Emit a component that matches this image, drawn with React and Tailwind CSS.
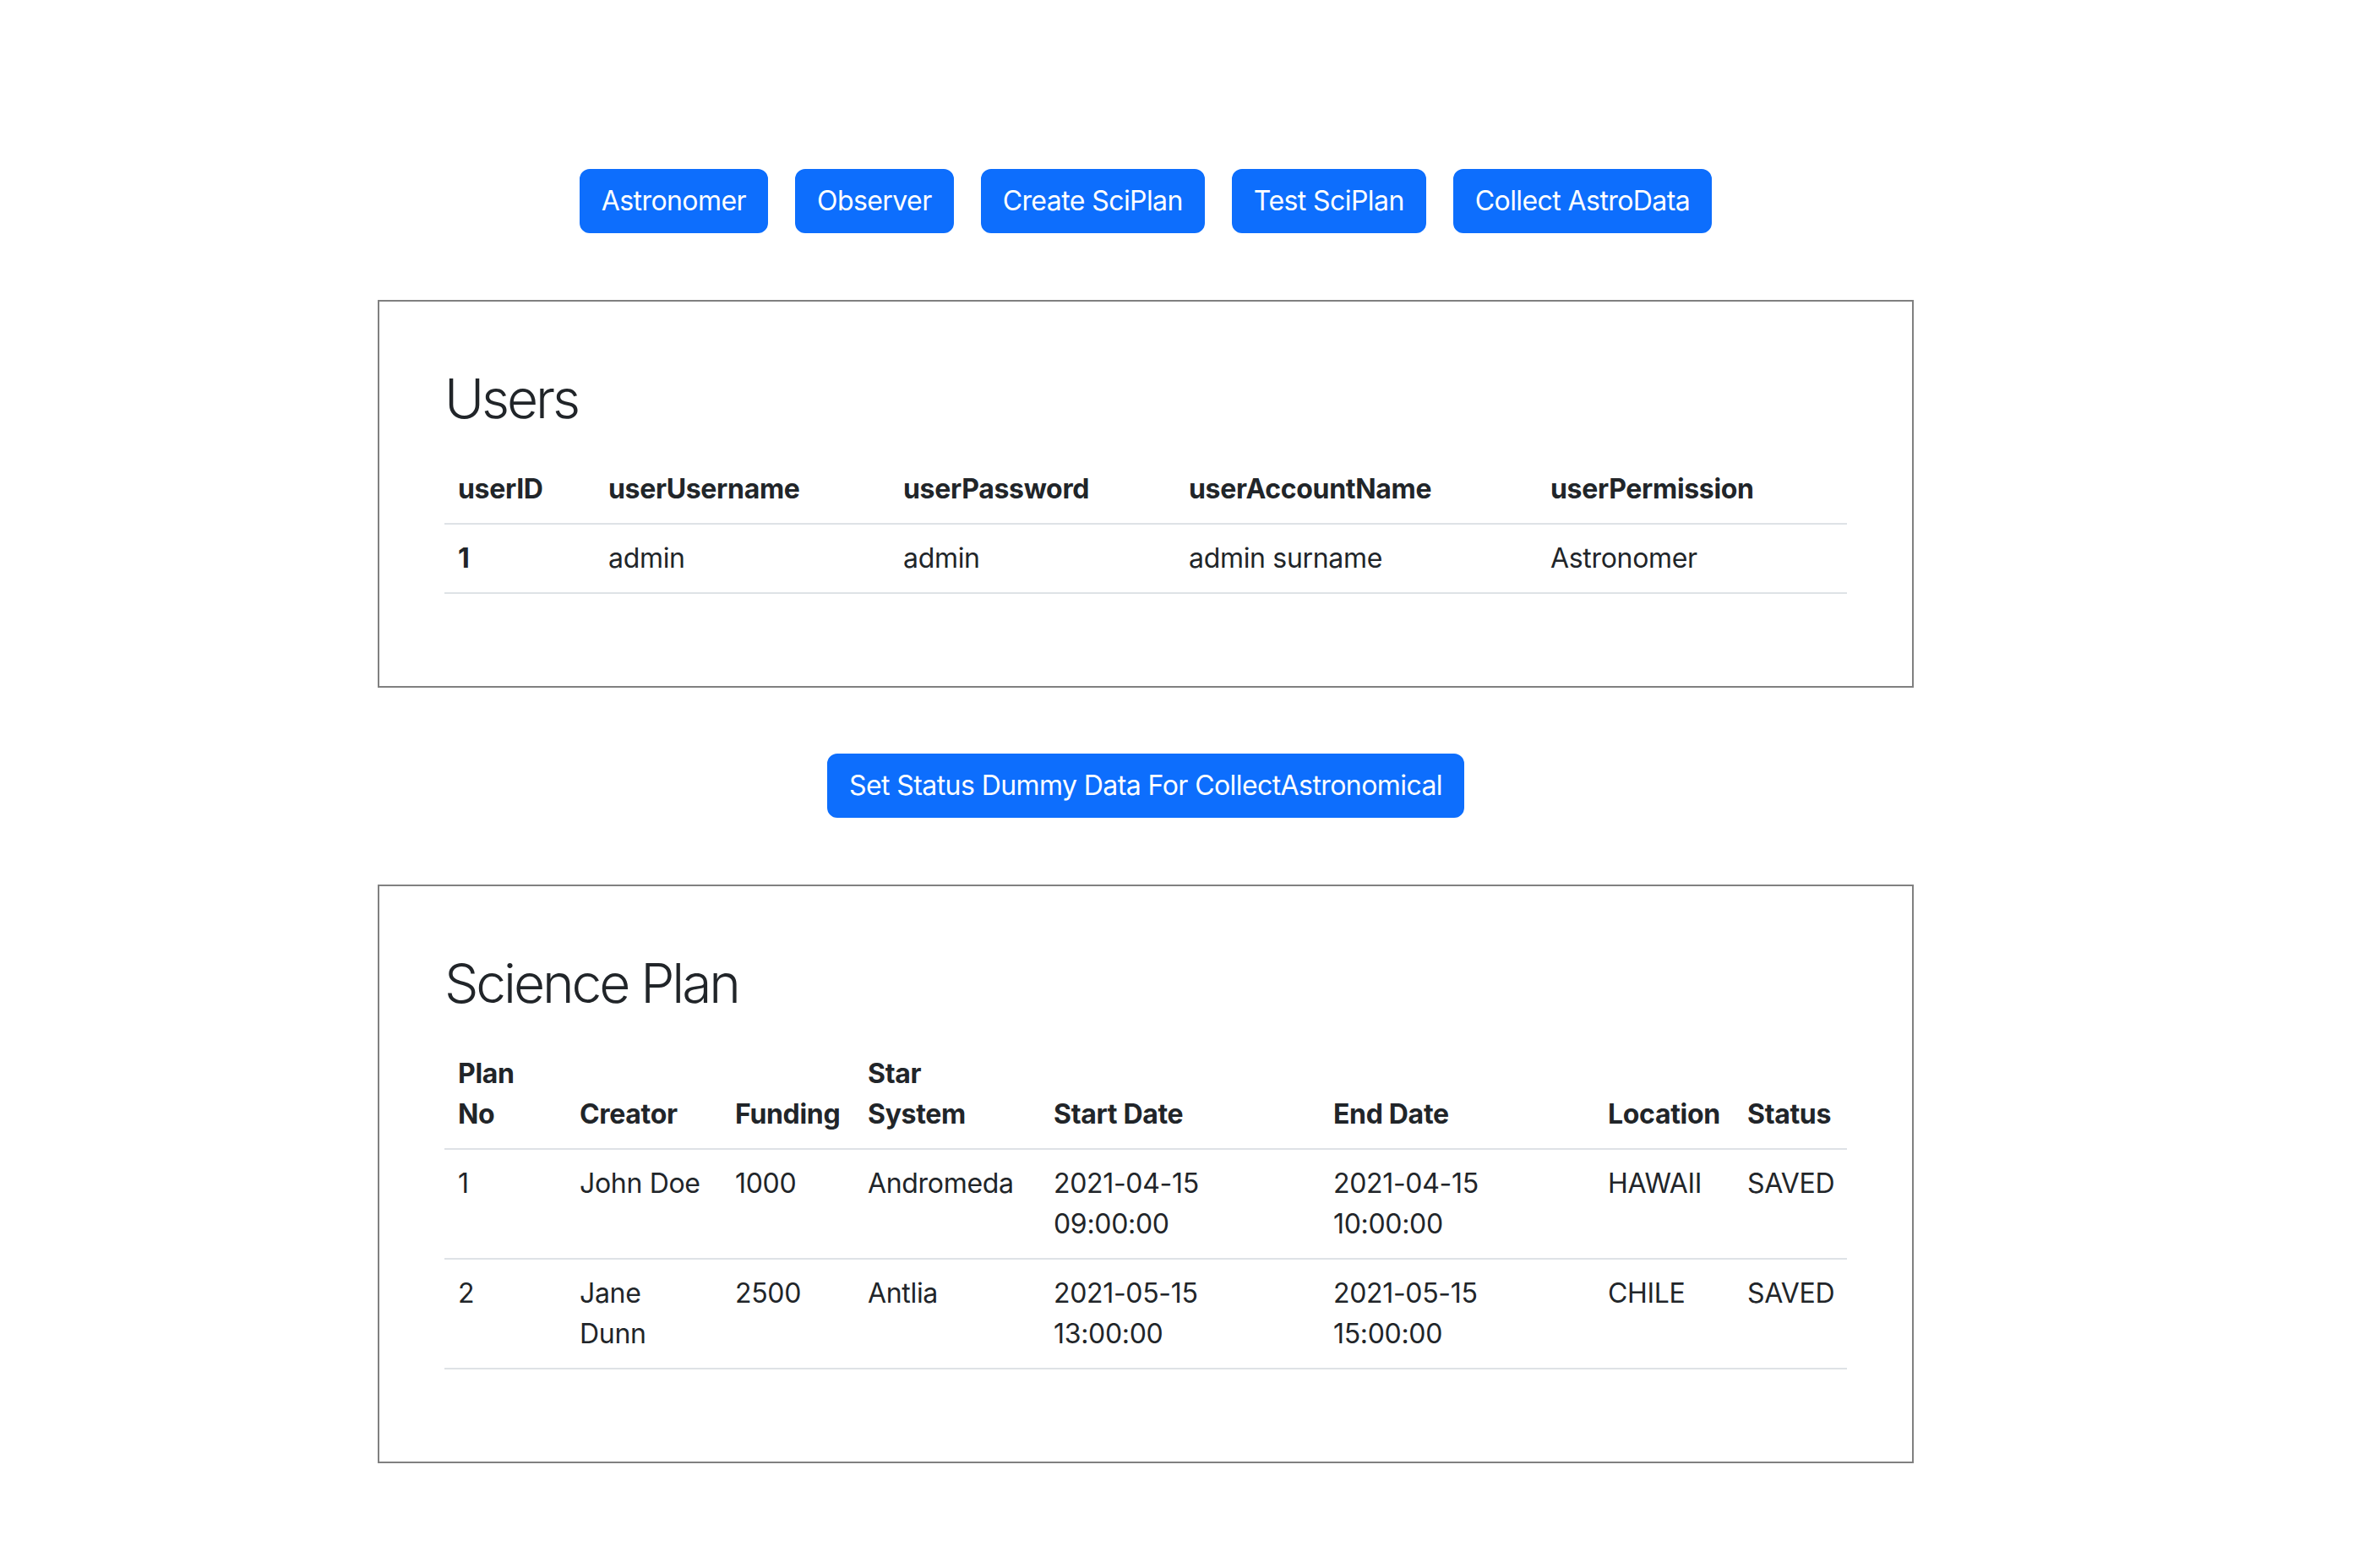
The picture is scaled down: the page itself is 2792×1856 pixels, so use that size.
import React from "react";

const navButtons = ["Astronomer", "Observer", "Create SciPlan", "Test SciPlan", "Collect AstroData"];

const users = [
  { id: 1, username: "admin", password: "admin", accountName: "admin surname", permission: "Astronomer" },
];

const plans = [
  {
    no: 1,
    creator: "John Doe",
    funding: 1000,
    star: "Andromeda",
    start: ["2021-04-15", "09:00:00"],
    end: ["2021-04-15", "10:00:00"],
    location: "HAWAII",
    status: "SAVED",
  },
  {
    no: 2,
    creator: ["Jane", "Dunn"],
    funding: 2500,
    star: "Antlia",
    start: ["2021-05-15", "13:00:00"],
    end: ["2021-05-15", "15:00:00"],
    location: "CHILE",
    status: "SAVED",
  },
];

const cell = "px-[16px] py-[16px] border-b-2 border-[#dee2e6] text-left";

const Lines = ({ value }) =>
  Array.isArray(value) ? (
    <>
      {value[0]}
      <br />
      {value[1]}
    </>
  ) : (
    value
  );

const PrimaryButton = ({ children }) => (
  <button
    className="
      h-[76px] px-[24px] rounded-[12px] border-2 border-[#0d6efd]
      bg-[#0d6efd] text-white text-[32px] leading-[48px] whitespace-nowrap
      tracking-[-0.018em] hover:bg-[#0b5ed7]
    "
  >
    {children}
  </button>
);

const Panel = ({ title, children }) => (
  <div className="w-[1818px] border-2 border-[#808080] px-[77px] pt-[76px] pb-[109px]">
    <h2 className="text-[64px] leading-[77px] font-light tracking-[-0.048em] mb-[29px]">{title}</h2>
    {children}
  </div>
);

export default function App() {
  return (
    <div
      className="min-h-[1856px] w-[2712px] bg-white text-[#212529] tracking-[-0.02em] flex flex-col items-center pt-[200px]"
      style={{ fontFamily: "Inter, 'Noto Sans', sans-serif" }}
    >
      {/* Top nav */}
      <div className="flex gap-[32px]">
        {navButtons.map((b) => (
          <PrimaryButton key={b}>{b}</PrimaryButton>
        ))}
      </div>

      {/* Users */}
      <div className="mt-[79px]">
        <Panel title="Users">
          <table className="w-[1660px] table-fixed border-collapse text-[32px] leading-[48px]">
            <colgroup>
              <col className="w-[178px]" />
              <col className="w-[349px]" />
              <col className="w-[338px]" />
              <col className="w-[428px]" />
              <col className="w-[367px]" />
            </colgroup>
            <thead className="align-bottom font-bold">
              <tr>
                <th className={cell}>userID</th>
                <th className={cell}>userUsername</th>
                <th className={cell}>userPassword</th>
                <th className={cell}>userAccountName</th>
                <th className={cell}>userPermission</th>
              </tr>
            </thead>
            <tbody className="align-top">
              {users.map((u) => (
                <tr key={u.id}>
                  <th className={cell + " font-bold"}>{u.id}</th>
                  <td className={cell}>{u.username}</td>
                  <td className={cell}>{u.password}</td>
                  <td className={cell}>{u.accountName}</td>
                  <td className={cell}>{u.permission}</td>
                </tr>
              ))}
            </tbody>
          </table>
        </Panel>
      </div>

      <div className="mt-[78px]">
        <PrimaryButton>Set Status Dummy Data For CollectAstronomical</PrimaryButton>
      </div>

      {/* Science plans */}
      <div className="mt-[79px]">
        <Panel title="Science Plan">
          <table className="w-[1660px] table-fixed border-collapse text-[32px] leading-[48px]">
            <colgroup>
              <col className="w-[144px]" />
              <col className="w-[184px]" />
              <col className="w-[157px]" />
              <col className="w-[220px]" />
              <col className="w-[331px]" />
              <col className="w-[325px]" />
              <col className="w-[165px]" />
              <col className="w-[134px]" />
            </colgroup>
            <thead className="align-bottom font-bold">
              <tr>
                <th className={cell}>
                  Plan
                  <br />
                  No
                </th>
                <th className={cell}>Creator</th>
                <th className={cell}>Funding</th>
                <th className={cell}>
                  Star
                  <br />
                  System
                </th>
                <th className={cell}>Start Date</th>
                <th className={cell}>End Date</th>
                <th className={cell}>Location</th>
                <th className={cell}>Status</th>
              </tr>
            </thead>
            <tbody className="align-top">
              {plans.map((p) => (
                <tr key={p.no}>
                  <td className={cell}>{p.no}</td>
                  <td className={cell + " whitespace-nowrap"}>
                    <Lines value={p.creator} />
                  </td>
                  <td className={cell}>{p.funding}</td>
                  <td className={cell}>{p.star}</td>
                  <td className={cell + " whitespace-nowrap"}>
                    <Lines value={p.start} />
                  </td>
                  <td className={cell + " whitespace-nowrap"}>
                    <Lines value={p.end} />
                  </td>
                  <td className={cell}>{p.location}</td>
                  <td className={cell}>{p.status}</td>
                </tr>
              ))}
            </tbody>
          </table>
        </Panel>
      </div>
    </div>
  );
}
